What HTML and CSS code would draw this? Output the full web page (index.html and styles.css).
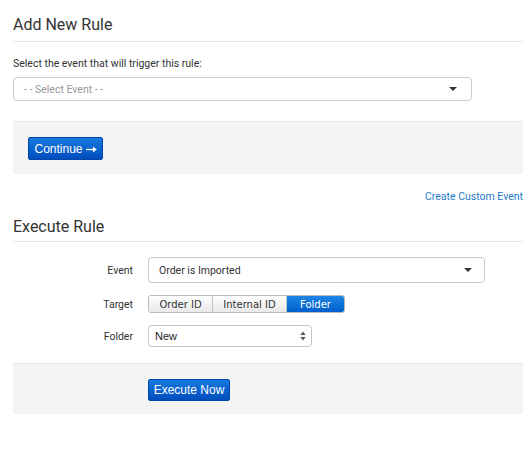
FILE: index.html
```html
<!DOCTYPE html>
<html>
<head>
<meta charset="utf-8">
<link rel="stylesheet" href="styles.css">
</head>
<body>
<div class="page">
  <section class="add-rule">
    <h2 class="section-title">Add New Rule</h2>
    <div class="field-label">Select the event that will trigger this rule:</div>
    <div class="select select-wide">
      <span class="placeholder">- - Select Event - -</span>
      <span class="caret"></span>
    </div>
    <div class="action-panel">
      <button class="btn-primary btn-continue">Continue <svg class="arrow" width="11" height="7" viewBox="0 0 11 7"><path d="M0 3.5 H8.5" stroke="#fff" stroke-width="1.4"/><path d="M7 0.6 L10.8 3.5 L7 6.4 Z" fill="#fff"/></svg></button>
    </div>
    <div class="link-row"><a class="link">Create Custom Event</a></div>
  </section>

  <section class="execute-rule">
    <h2 class="section-title">Execute Rule</h2>
    <div class="form-grid">
      <div class="row-label">Event</div>
      <div class="select select-event">
        <span class="value">Order is Imported</span>
        <span class="caret"></span>
      </div>

      <div class="row-label">Target</div>
      <div class="segmented">
        <span class="seg seg-order">Order ID</span>
        <span class="seg seg-internal">Internal ID</span>
        <span class="seg seg-folder active">Folder</span>
      </div>

      <div class="row-label">Folder</div>
      <div class="native-select">
        <span class="value">New</span>
        <svg class="updown" width="6" height="10" viewBox="0 0 6 10"><path d="M3 0.5 L5.6 4 H0.4 Z M3 9.5 L5.6 6 H0.4 Z" fill="#555"/></svg>
      </div>
    </div>
    <div class="action-panel execute-panel">
      <button class="btn-primary btn-execute">Execute Now</button>
    </div>
  </section>
</div>
</body>
</html>
```

FILE: styles.css
```css
html, body {
  margin: 0;
  padding: 0;
  background: #ffffff;
}

.page {
  padding: 0 9px 0 13px;
  font-family: Roboto, "Liberation Sans", Arial, sans-serif;
  color: #333333;
}

.section-title {
  margin: 0;
  padding: 14px 0 5px;
  font-size: 16px;
  line-height: 22px;
  font-weight: 400;
  color: #333333;
  border-bottom: 1px solid #e4e4e4;
}

.execute-rule .section-title {
  padding-top: 13px;
  padding-bottom: 3px;
}

.field-label {
  margin-top: 15px;
  font-size: 10.5px;
  line-height: 13px;
  color: #333;
}

.select {
  box-sizing: border-box;
  display: flex;
  align-items: center;
  justify-content: space-between;
  border: 1px solid #cccccc;
  border-radius: 4px;
  background: #ffffff;
  font-size: 10.5px;
}

.select-wide {
  margin-top: 7px;
  width: 459px;
  height: 24px;
  padding: 0 14px 0 10px;
}

.placeholder {
  color: #999999;
}

.caret {
  width: 0;
  height: 0;
  border-left: 4px solid transparent;
  border-right: 4px solid transparent;
  border-top: 4px solid #333333;
}

.action-panel {
  box-sizing: border-box;
  margin-top: 20px;
  height: 53px;
  padding: 15px 15px 0;
  background: #f4f4f4;
  border-top: 1px solid #e6e6e6;
}

.btn-primary {
  display: flex;
  align-items: center;
  justify-content: center;
  gap: 3px;
  box-sizing: border-box;
  margin: 0;
  padding: 0;
  border: 1px solid #0046a8;
  border-radius: 2px;
  background: linear-gradient(#1679e0, #004dbd);
  color: #ffffff;
  font-family: "Liberation Sans", Arial, sans-serif;
  font-size: 12px;
  line-height: 1;
  white-space: nowrap;
  cursor: pointer;
}

.btn-continue {
  width: 75px;
  height: 23px;
}

.arrow {
  display: block;
  margin-top: 1px;
}

.link-row {
  margin-top: 16px;
  text-align: right;
  font-size: 10.5px;
  line-height: 13px;
}

.link {
  color: #1f7bcb;
  text-decoration: none;
}

.form-grid {
  display: grid;
  grid-template-columns: 120px auto;
  column-gap: 15px;
  row-gap: 12px;
  align-items: center;
  justify-items: start;
  margin-top: 15px;
}

.row-label {
  justify-self: end;
  font-size: 10.5px;
  line-height: 13px;
  color: #333;
}

.select-event {
  width: 337px;
  height: 26px;
  padding: 0 12px 0 10px;
  border-color: #c8c8c8;
  color: #333;
}

.segmented {
  display: flex;
  height: 18px;
  border: 1px solid #b9b9b9;
  border-radius: 3px;
  overflow: hidden;
  box-sizing: border-box;
  font-family: "DejaVu Sans", Verdana, sans-serif;
  font-size: 10px;
}

.seg {
  box-sizing: border-box;
  display: flex;
  align-items: center;
  justify-content: center;
  height: 100%;
  background: linear-gradient(#ffffff, #e9e9e9);
  color: #333;
  border-right: 1px solid #c4c4c4;
}

.seg-order { width: 64px; }
.seg-internal { width: 74px; }
.seg-folder { width: 57px; border-right: 0; }

.seg.active {
  background: linear-gradient(#1d86e6, #005fcc);
  color: #ffffff;
}

.native-select {
  box-sizing: border-box;
  display: flex;
  align-items: center;
  justify-content: space-between;
  width: 164px;
  height: 22px;
  padding: 0 5px 0 6px;
  border: 1px solid #c6c6c6;
  border-radius: 4px;
  background: #ffffff;
  font-family: "Liberation Sans", Arial, sans-serif;
  font-size: 11px;
  color: #222;
}

.execute-panel {
  margin-top: 16px;
  height: 51px;
  padding-left: 135px;
}

.btn-execute {
  width: 82px;
  height: 22px;
}
```
